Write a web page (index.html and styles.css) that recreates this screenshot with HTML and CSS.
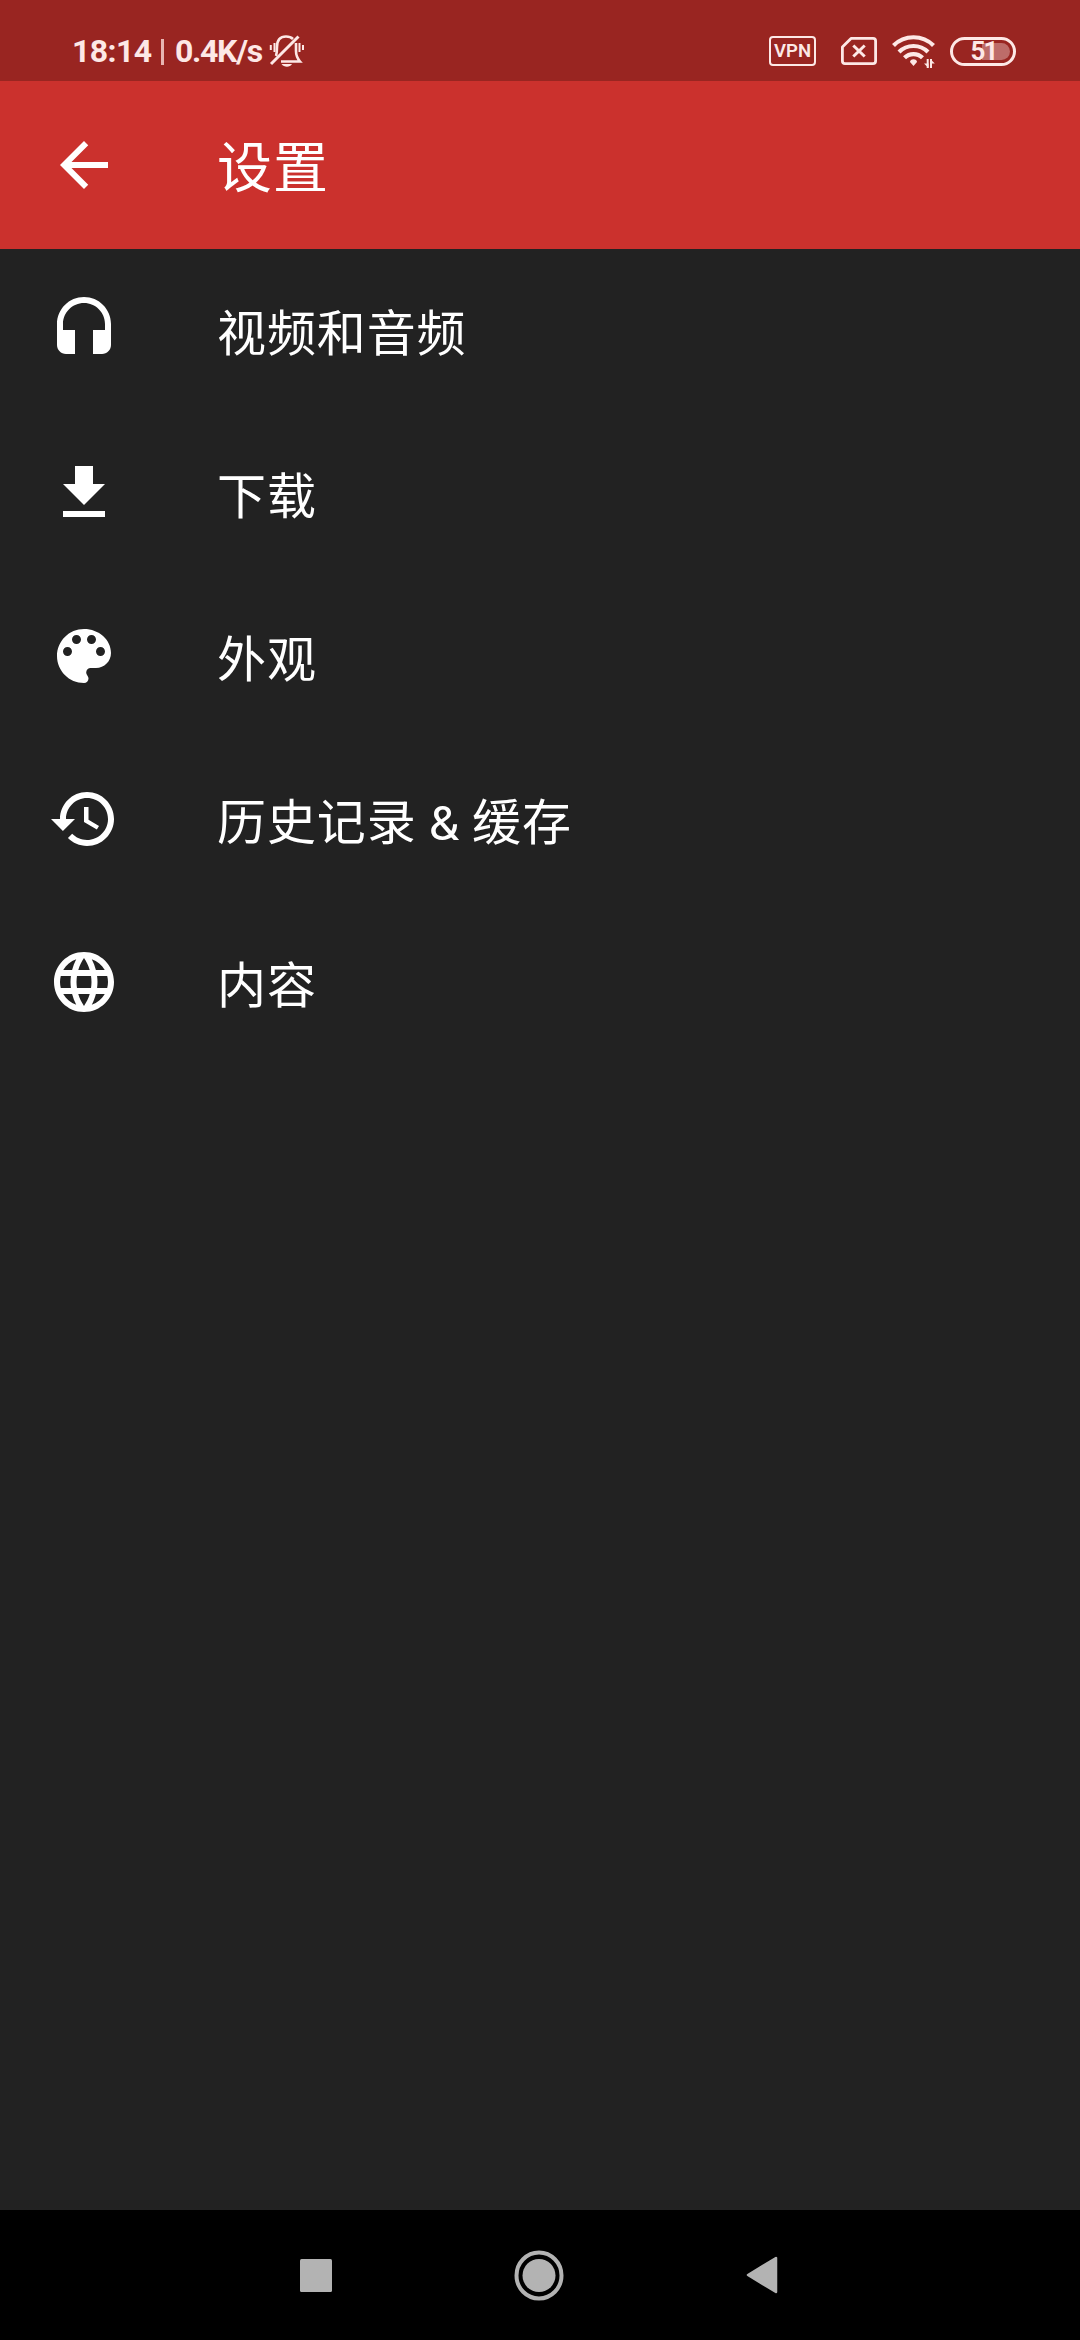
FILE: index.html
```html
<!DOCTYPE html>
<html lang="zh-CN">
<head>
<meta charset="utf-8">
<title>设置</title>
<link rel="stylesheet" href="styles.css">
</head>
<body>
<header class="status">
  <span class="time">18:14</span><span class="divider"></span><span class="speed">0.4K/s</span>
  <svg class="bell" width="36" height="34" viewBox="0 0 36 34" fill="none" stroke="currentColor" stroke-width="2.6">
    <path d="M7 22C8 19 8 17 8 13C8 6 11 2.5 17 2.5C20 2.5 22 3 24 5M27 9V17C27 21 28 24 31 27.5H12"/>
    <path d="M2 30L29.5 2.5" stroke-width="3"/>
    <path d="M1.8 11V16M5.5 9V18M30.5 9V18M34 11V16" stroke-width="2"/>
    <path d="M12.5 30H23C21 33.5 15 33.5 12.5 30Z" fill="currentColor" stroke="none"/>
  </svg>
  <span class="spacer"></span>
  <span class="vpn">VPN</span>
  <svg class="sim" width="36" height="28" viewBox="0 0 36 28" fill="none" stroke="currentColor" stroke-width="2.8">
    <path d="M10 1.4H32Q34.6 1.4 34.6 4V24Q34.6 26.6 32 26.6H4Q1.4 26.6 1.4 24V10Z" stroke-linejoin="round"/>
    <path d="M12.3 8.5L23.7 19.5M23.7 8.5L12.3 19.5" stroke-width="3"/>
  </svg>
  <svg class="wifi" width="44" height="34" viewBox="0 0 44 34" fill="none" stroke="currentColor" stroke-width="4.2">
    <path d="M1.5 10.5C12.5-.5 30.5-.5 41.5 10.5M7 17C15 9 28 9 36 17M12.5 22.8C17.5 17.8 25.5 17.8 30.5 22.8"/>
    <path d="M21.5 24.3C23.5 24.3 25 25.6 25 27L21.5 31L18 27C18 25.6 19.5 24.3 21.5 24.3Z" fill="currentColor" stroke="none"/>
    <path d="M35.7 24V33M39 33V24" stroke-width="2"/>
    <path d="M36.5 33L32 28.5H36.5ZM38.3 24L42.8 28.5H38.3Z" fill="currentColor" stroke="none"/>
  </svg>
  <span class="battery"><span class="level"></span><span class="percent">51</span></span>
</header>
<div class="appbar">
  <svg class="icon" viewBox="0 0 24 24"><path d="M20 11H7.83l5.59-5.59L12 4l-8 8 8 8 1.41-1.41L7.83 13H20v-2z"/></svg>
  <h1 class="title">设置</h1>
</div>
<main class="list">
  <div class="row">
    <svg class="icon" viewBox="0 0 24 24"><path d="M12 1c-4.97 0-9 4.03-9 9v7c0 1.66 1.34 3 3 3h3v-8H5v-2c0-3.87 3.13-7 7-7s7 3.13 7 7v2h-4v8h3c1.66 0 3-1.34 3-3v-7c0-4.97-4.03-9-9-9z"/></svg>
    <span class="label">视频和音频</span>
  </div>
  <div class="row">
    <svg class="icon" viewBox="0 0 24 24"><path d="M19 9h-4V3H9v6H5l7 7 7-7zM5 18v2h14v-2H5z"/></svg>
    <span class="label">下载</span>
  </div>
  <div class="row">
    <svg class="icon" viewBox="0 0 24 24"><path d="M12 3c-4.97 0-9 4.03-9 9s4.03 9 9 9c.83 0 1.5-.67 1.5-1.5 0-.39-.15-.74-.39-1.01-.23-.26-.38-.61-.38-.99 0-.83.67-1.5 1.5-1.5H16c2.76 0 5-2.24 5-5 0-4.42-4.03-8-9-8zm-5.5 9c-.83 0-1.5-.67-1.5-1.5S5.67 9 6.5 9 8 9.67 8 10.5 7.33 12 6.5 12zm3-4C8.67 8 8 7.33 8 6.5S8.67 5 9.5 5s1.5.67 1.5 1.5S10.33 8 9.5 8zm5 0c-.83 0-1.5-.67-1.5-1.5S13.67 5 14.5 5s1.5.67 1.5 1.5S15.33 8 14.5 8zm3 4c-.83 0-1.5-.67-1.5-1.5S16.67 9 17.5 9s1.5.67 1.5 1.5-.67 1.5-1.5 1.5z"/></svg>
    <span class="label">外观</span>
  </div>
  <div class="row">
    <svg class="icon" viewBox="0 0 24 24"><path d="M13 3c-4.97 0-9 4.03-9 9H1l3.89 3.89.07.14L9 12H6c0-3.87 3.13-7 7-7s7 3.13 7 7-3.13 7-7 7c-1.93 0-3.68-.79-4.94-2.06l-1.42 1.42C8.27 19.99 10.51 21 13 21c4.97 0 9-4.03 9-9s-4.03-9-9-9zm-1 5v5l4.28 2.54.72-1.21-3.5-2.08V8H12z"/></svg>
    <span class="label">历史记录 &amp; 缓存</span>
  </div>
  <div class="row">
    <svg class="icon" viewBox="0 0 24 24"><path d="M11.99 2C6.47 2 2 6.48 2 12s4.47 10 9.99 10C17.52 22 22 17.52 22 12S17.52 2 11.99 2zm6.93 6h-2.95c-.32-1.25-.78-2.45-1.38-3.56 1.84.63 3.37 1.91 4.33 3.56zM12 4.04c.83 1.2 1.48 2.53 1.91 3.96h-3.82c.43-1.43 1.08-2.76 1.91-3.96zM4.26 14C4.1 13.36 4 12.69 4 12s.1-1.36.26-2h3.38c-.08.66-.14 1.32-.14 2 0 .68.06 1.34.14 2H4.26zm.82 2h2.95c.32 1.25.78 2.45 1.38 3.56-1.84-.63-3.37-1.9-4.33-3.56zm2.95-8H5.08c.96-1.66 2.49-2.93 4.33-3.56C8.81 5.55 8.35 6.75 8.03 8zM12 19.96c-.83-1.2-1.48-2.53-1.91-3.96h3.82c-.43 1.43-1.08 2.76-1.91 3.96zM14.34 14H9.66c-.09-.66-.16-1.32-.16-2 0-.68.07-1.35.16-2h4.68c.09.65.16 1.32.16 2 0 .68-.07 1.34-.16 2zm.25 5.56c.6-1.11 1.06-2.31 1.38-3.56h2.95c-.96 1.65-2.49 2.93-4.33 3.56zM16.36 14c.08-.66.14-1.32.14-2 0-.68-.06-1.34-.14-2h3.38c.16.64.26 1.31.26 2s-.1 1.36-.26 2h-3.38z"/></svg>
    <span class="label">内容</span>
  </div>
</main>
<nav class="navbar">
  <svg width="32" height="33" viewBox="0 0 32 33"><rect width="32" height="33" rx="1.5"/></svg>
  <svg width="50" height="51" viewBox="0 0 50 51"><ellipse cx="25" cy="25.5" rx="22.5" ry="23" fill="none" stroke="#b3b3b3" stroke-width="4"/><circle cx="25" cy="25.5" r="16.5"/></svg>
  <svg width="32" height="38" viewBox="0 0 32 38"><path d="M2 19L30 2V36Z" stroke="#b3b3b3" stroke-width="2.5" stroke-linejoin="round"/></svg>
</nav>
</body>
</html>
```
FILE: styles.css
```css
body {
  margin: 0;
  width: 1080px;
  height: 2340px;
  display: flex;
  flex-direction: column;
  background: #222;
  color: #fff;
  font-family: Roboto, "Noto Sans CJK SC", sans-serif;
}

svg {
  display: block;
  flex: none;
}

.status {
  box-sizing: border-box;
  height: 81px;
  padding: 21px 64px 0 72px;
  display: flex;
  align-items: center;
  background: #992521;
  color: #fde8e6;
  font-weight: 700;
  font-size: 32px;
  line-height: 36px;
}

.time {
  width: 80px;
  letter-spacing: -0.6px;
}

.divider {
  width: 3px;
  height: 26px;
  margin: 2px 11px 0 9px;
  background: #e8b5b2;
}

.speed {
  width: 89px;
  letter-spacing: -1.3px;
}

.bell {
  margin-left: 5px;
}

.spacer {
  flex: 1;
}

.vpn {
  box-sizing: border-box;
  width: 47px;
  height: 30px;
  border: 2.5px solid;
  border-radius: 4px;
  font-size: 18.5px;
  font-weight: 600;
  line-height: 26px;
  text-align: center;
}

.sim {
  margin-left: 25px;
}

.wifi {
  margin: 2px 14px 0 15px;
}

.battery {
  box-sizing: border-box;
  width: 66px;
  height: 29px;
  border: 3px solid;
  border-radius: 15px;
  display: grid;
  align-items: center;
  justify-items: center;
}

.level,
.percent {
  grid-area: 1 / 1;
}

.level {
  width: 28px;
  height: 17px;
  margin-right: 3px;
  justify-self: end;
  border-radius: 0 9px 9px 0;
  background: #bd6c69;
}

.percent {
  z-index: 1;
  padding-left: 1px;
  font-size: 26px;
  line-height: 23px;
  letter-spacing: -2px;
}

.appbar {
  height: 168px;
  padding: 0 48px;
  display: flex;
  align-items: center;
  gap: 97px;
  background: #cb312d;
}

.icon {
  width: 72px;
  height: 72px;
  fill: currentColor;
}

.title {
  margin: 0;
  padding-top: 6px;
  font-weight: 400;
  font-size: 55px;
  line-height: 80px;
  letter-spacing: 1px;
}

.list {
  flex: 1;
}

.row {
  box-sizing: border-box;
  height: 163px;
  padding: 0 48px 1px;
  display: flex;
  align-items: center;
  gap: 97px;
}

.label {
  padding-top: 9px;
  font-size: 49px;
  line-height: 72px;
  letter-spacing: 0.9px;
  word-spacing: -1px;
}

.navbar {
  height: 130px;
  padding-right: 2px;
  display: flex;
  align-items: center;
  justify-content: center;
  gap: 182px;
  background: #000;
  fill: #b3b3b3;
}
```
